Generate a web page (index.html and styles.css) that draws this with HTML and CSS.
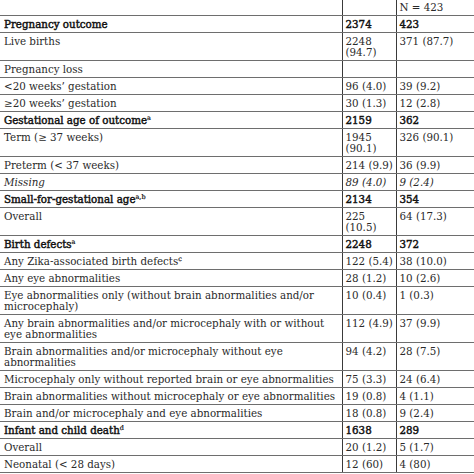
FILE: index.html
```html
<!DOCTYPE html>
<html>
<head>
<meta charset="utf-8">
<link rel="stylesheet" href="styles.css">
</head>
<body>
<table class="tbl">
<colgroup><col class="c1"><col class="c2"><col class="c3"></colgroup>
<tr class="head"><td></td><td></td><td>N = 423</td></tr>
<tr class="b"><td>Pregnancy outcome</td><td>2374</td><td>423</td></tr>
<tr><td>Live births</td><td>2248 (94.7)</td><td>371 (87.7)</td></tr>
<tr><td>Pregnancy loss</td><td></td><td></td></tr>
<tr><td>&lt;20 weeks’ gestation</td><td>96 (4.0)</td><td>39 (9.2)</td></tr>
<tr><td>≥20 weeks’ gestation</td><td>30 (1.3)</td><td>12 (2.8)</td></tr>
<tr class="b"><td>Gestational age of outcome<sup>a</sup></td><td>2159</td><td>362</td></tr>
<tr><td>Term (≥ 37 weeks)</td><td>1945 (90.1)</td><td>326 (90.1)</td></tr>
<tr><td>Preterm (&lt; 37 weeks)</td><td>214 (9.9)</td><td>36 (9.9)</td></tr>
<tr class="i"><td>Missing</td><td>89 (4.0)</td><td>9 (2.4)</td></tr>
<tr class="b"><td>Small-for-gestational age<sup>a,b</sup></td><td>2134</td><td>354</td></tr>
<tr><td>Overall</td><td>225 (10.5)</td><td>64 (17.3)</td></tr>
<tr class="b"><td>Birth defects<sup>a</sup></td><td>2248</td><td>372</td></tr>
<tr><td>Any Zika-associated birth defects<sup>c</sup></td><td>122 (5.4)</td><td>38 (10.0)</td></tr>
<tr><td>Any eye abnormalities</td><td>28 (1.2)</td><td>10 (2.6)</td></tr>
<tr><td>Eye abnormalities only (without brain abnormalities and/or microcephaly)</td><td>10 (0.4)</td><td>1 (0.3)</td></tr>
<tr><td>Any brain abnormalities and/or microcephaly with or without eye abnormalities</td><td>112 (4.9)</td><td>37 (9.9)</td></tr>
<tr><td>Brain abnormalities and/or microcephaly without eye abnormalities</td><td>94 (4.2)</td><td>28 (7.5)</td></tr>
<tr><td>Microcephaly only without reported brain or eye abnormalities</td><td>75 (3.3)</td><td>24 (6.4)</td></tr>
<tr><td>Brain abnormalities without microcephaly or eye abnormalities</td><td>19 (0.8)</td><td>4 (1.1)</td></tr>
<tr><td>Brain and/or microcephaly and eye abnormalities</td><td>18 (0.8)</td><td>9 (2.4)</td></tr>
<tr class="b"><td>Infant and child death<sup>d</sup></td><td>1638</td><td>289</td></tr>
<tr><td>Overall</td><td>20 (1.2)</td><td>5 (1.7)</td></tr>
<tr><td>Neonatal (&lt; 28 days)</td><td>12 (60)</td><td>4 (80)</td></tr>
</table>
</body>
</html>
```
FILE: styles.css
```css
html, body {
  margin: 0;
  padding: 0;
  background: #fff;
  overflow: hidden;
}
.tbl {
  width: 474px;
  border-collapse: collapse;
  table-layout: fixed;
  font-family: "DejaVu Serif", serif;
  font-size: 10.3px;
  line-height: 11px;
  color: #2a2a2a;
}
.c1 { width: 342px; }
.c2 { width: 54px; }
.c3 { width: 78px; }
.tbl td {
  padding: 3px 0 2px 4px;
  vertical-align: top;
  border-bottom: 1px solid #6e6e6e;
}
.tbl td + td {
  border-left: 1px solid #3a3a3a;
  padding-left: 3px;
}
.head td {
  padding-top: 2px;
}
.b td {
  font-weight: normal;
  color: #111;
  -webkit-text-stroke: 0.45px #111;
}
.i td { font-style: italic; }
sup {
  font-size: 6.5px;
  line-height: 0;
  vertical-align: 4px;
  -webkit-text-stroke: 0.2px #111;
}
```
